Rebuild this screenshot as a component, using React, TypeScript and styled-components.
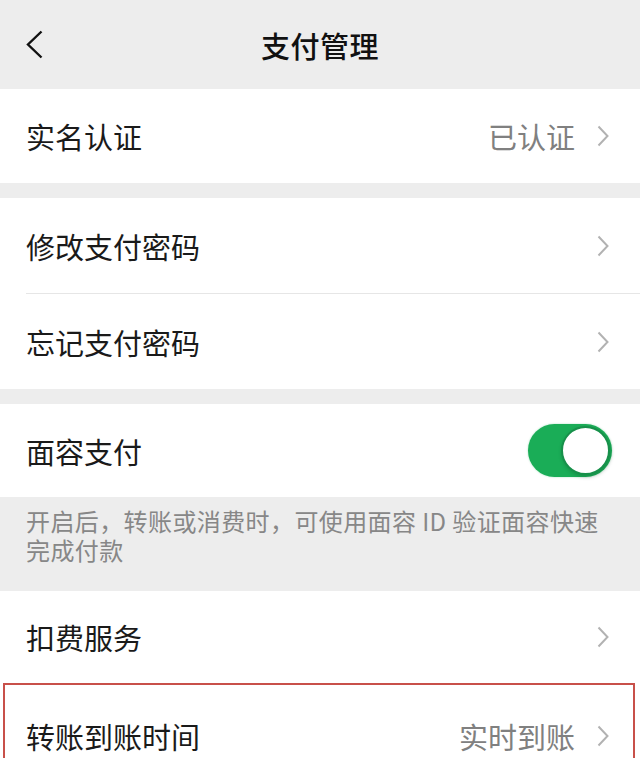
import React from 'react';
import styled, { createGlobalStyle } from 'styled-components';

const GlobalStyle = createGlobalStyle`
    html, body {
        margin: 0;
        padding: 0;
        background: #ededed;
    }
    body {
        font-family: "Noto Sans CJK SC", "Noto Sans", sans-serif;
        color: #191919;
    }
`;

const Page = styled.div`
    width: 640px;
    height: 758px;
    overflow: hidden;
    background: #ededed;
`;

const NavBar = styled.div`
    height: 89px;
    display: grid;
    grid-template-columns: 80px 1fr 80px;
    align-items: center;
`;

const BackButton = styled.div`
    display: flex;
    align-items: center;
    padding-left: 26px;
    height: 100%;
`;

const Title = styled.h1`
    margin: 0;
    text-align: center;
    font-size: 29px;
    font-weight: 500;
    letter-spacing: 0.5px;
    color: #111;
`;

const Group = styled.div<{ gapTop?: number }>`
    background: #fff;
    margin-top: ${p => p.gapTop || 0}px;
`;

const Row = styled.div<{ height: number; insetLeft?: number; insetRight?: number }>`
    height: ${p => p.height}px;
    display: flex;
    align-items: center;
    justify-content: space-between;
    padding: 0 ${p => 31 - (p.insetRight || 0)}px 0 ${p => 26 - (p.insetLeft || 0)}px;
    box-sizing: border-box;
`;

const Label = styled.span`
    font-size: 29px;
    color: #1a1a1a;
`;

const Right = styled.div`
    display: flex;
    align-items: center;
    gap: 22px;
`;

const Value = styled.span`
    font-size: 29px;
    color: #808080;
`;

const Divider = styled.div`
    height: 1px;
    margin-left: 26px;
    background: #e6e6e6;
`;

const Switch = styled.div<{ on: boolean }>`
    position: relative;
    width: 84px;
    height: 53px;
    border-radius: 27px;
    background: ${p => (p.on ? '#1aad57' : '#e5e5e5')};
    margin-right: -3px;
    box-shadow: 0 0 2px rgba(26, 173, 87, 0.4);
`;

const Knob = styled.div<{ on: boolean }>`
    position: absolute;
    top: 2px;
    left: ${p => (p.on ? '33px' : '2px')};
    width: 45px;
    height: 45px;
    border-radius: 50%;
    background: #fff;
    border: 2px solid #17904a;
    box-shadow: 1px 2px 4px rgba(0, 0, 0, 0.18);
`;

const Hint = styled.div`
    height: 94px;
    box-sizing: border-box;
    padding: 9px 38px 0 26px;
    font-size: 24px;
    letter-spacing: 0.4px;
    line-height: 29px;
    color: #878787;
`;

const Highlight = styled.div`
    margin: 0 5px 0 3px;
    border: 2px solid #c8504a;
    border-bottom: none;
    background: #fff;
`;

const Chevron = () => (
    <svg width="12" height="22" viewBox="0 0 12 22">
        <path d="M1.5 1.5 L10.5 11 L1.5 20.5" fill="none" stroke="#b2b2b2" strokeWidth="2" />
    </svg>
);

const BackArrow = () => (
    <svg width="17" height="29" viewBox="0 0 17 29">
        <path d="M15.5 1.5 L2 14.5 L15.5 27.5" fill="none" stroke="#111" strokeWidth="2.4" />
    </svg>
);

const App = () => {
    return (
        <Page>
            <GlobalStyle />
            <NavBar>
                <BackButton>
                    <BackArrow />
                </BackButton>
                <Title>支付管理</Title>
                <div />
            </NavBar>

            <Group>
                <Row height={94}>
                    <Label>实名认证</Label>
                    <Right>
                        <Value>已认证</Value>
                        <Chevron />
                    </Right>
                </Row>
            </Group>

            <Group gapTop={15}>
                <Row height={95}>
                    <Label>修改支付密码</Label>
                    <Chevron />
                </Row>
                <Divider />
                <Row height={95}>
                    <Label>忘记支付密码</Label>
                    <Chevron />
                </Row>
            </Group>

            <Group gapTop={15}>
                <Row height={93}>
                    <Label>面容支付</Label>
                    <Switch on>
                        <Knob on />
                    </Switch>
                </Row>
            </Group>
            <Hint>
                开启后，转账或消费时，可使用面容 ID 验证面容快速完成付款
            </Hint>

            <Group>
                <Row height={92}>
                    <Label>扣费服务</Label>
                    <Chevron />
                </Row>
                <Highlight>
                    <Row height={102} insetLeft={5} insetRight={7}>
                        <Label>转账到账时间</Label>
                        <Right>
                            <Value>实时到账</Value>
                            <Chevron />
                        </Right>
                    </Row>
                </Highlight>
            </Group>
        </Page>
    );
};

export default App;
